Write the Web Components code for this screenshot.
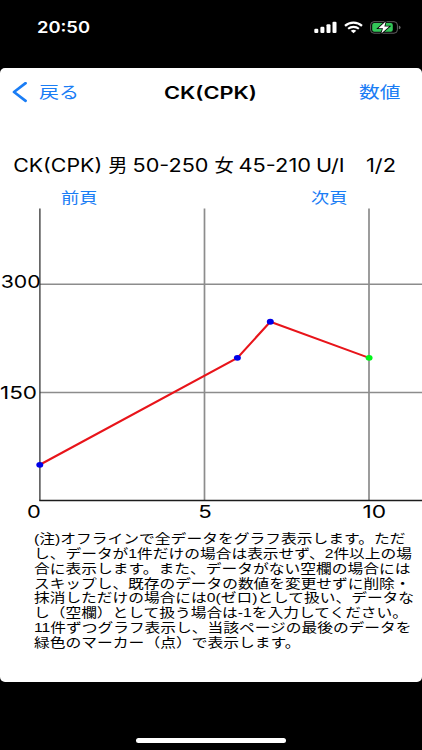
<!DOCTYPE html>
<html lang="ja">
<head>
<meta charset="utf-8">
<title>CK(CPK)</title>
<style>
    body{
        background-color: #000;
        font-family: Inter, 'Noto Sans CJK JP', sans-serif;
        margin: 0;
        overflow: hidden;
    }
</style>
</head>
<body>
<app-screen-component>
    <status-bar-component slot="status" time="20:50"></status-bar-component>
    <nav-bar-component slot="nav" back="戻る" title-text="CK(CPK)" action="数値"></nav-bar-component>
    <range-heading-component></range-heading-component>
    <page-links-component previous="前頁" next="次頁"></page-links-component>
    <line-chart-component></line-chart-component>
    <chart-note-component></chart-note-component>
</app-screen-component>

<script>
// One line of text stretched to a given advance width
class FitTextComponent extends HTMLElement {

    constructor() {
        super();
        this.shadow = this.attachShadow({ mode: 'open' });
    }

    connectedCallback() {
        this.render();
    }

    render() {

        let width = this.getAttribute('width');
        let height = this.getAttribute('height') || 20;
        let base = this.getAttribute('base') || 16;

        this.shadow.innerHTML =
        `
        <style>
            :host{
                display: block;
                height: ${height}px;
                width: ${width}px;
            }

            svg{
                display: block;
                overflow: visible;
            }

            text{
                fill: currentColor;
                font-size: ${this.getAttribute('size')}px;
            }
        </style>

        <svg width="${width}" height="${height}">
            <text x="0" y="${base}" textLength="${width}" lengthAdjust="spacingAndGlyphs">${this.getAttribute('text')}</text>
        </svg>`;
    }
}

customElements.define('fit-text-component', FitTextComponent);

class AppScreenComponent extends HTMLElement {

    constructor() {
        super();
        this.shadow = this.attachShadow({ mode: 'open' });
    }

    connectedCallback() {
        this.render();
    }

    render() {

        this.shadow.innerHTML =
        `
        <style>
            :host{
                background-color: #000;
                display: flex;
                flex-direction: column;
                height: 750px;
                width: 422px;
            }

            main{
                background-color: #fff;
                border-radius: 5px;
                color: #000;
                height: 614px;
            }

            footer{
                align-items: flex-end;
                display: flex;
                flex: 1;
                justify-content: center;
                padding-bottom: 7.5px;
            }

            #home-indicator{
                background-color: #fff;
                border-radius: 3px;
                height: 5px;
                width: 150px;
            }
        </style>

        <slot name="status"></slot>
        <main>
            <slot name="nav"></slot>
            <slot></slot>
        </main>
        <footer>
            <div id="home-indicator"></div>
        </footer>`;
    }
}

customElements.define('app-screen-component', AppScreenComponent);

class StatusBarComponent extends HTMLElement {

    constructor() {
        super();
        this.shadow = this.attachShadow({ mode: 'open' });
    }

    connectedCallback() {
        this.render();
    }

    render() {

        this.shadow.innerHTML =
        `
        <style>
            :host{
                box-sizing: border-box;
                color: #fff;
                display: flex;
                font-weight: 600;
                height: 68px;
                justify-content: space-between;
                padding: 17px 21px 0 36.5px;
            }

            #icons{
                display: flex;
                gap: 7px;
                padding-top: 4px;
            }

            svg{
                display: block;
            }
        </style>

        <fit-text-component text="${this.getAttribute('time')}" width="53" size="15.8" base="16.3"></fit-text-component>

        <div id="icons">
            <svg width="23" height="13" viewBox="0 0 23 13" fill="#fff">
                <rect x="0.3" y="7.8" width="4" height="4.2" rx="1.1"/>
                <rect x="6.4" y="5.8" width="4" height="6.2" rx="1.1"/>
                <rect x="12.5" y="3.2" width="4" height="8.8" rx="1.1"/>
                <rect x="18.5" y="0.7" width="4" height="11.3" rx="1.1"/>
            </svg>
            <svg width="19" height="13" viewBox="0 0 19 13" fill="none" stroke="#fff">
                <path d="M1 4.9C5.7 0.6 13.3 0.6 18 4.9" stroke-width="2.2"/>
                <path d="M4.1 7.8C7.2 5.2 11.8 5.2 14.9 7.8" stroke-width="2.1"/>
                <path d="M6.7 9.8Q9.5 7.9 12.3 9.8L9.5 12.2Z" fill="#fff" stroke="none"/>
            </svg>
            <svg width="31" height="13" viewBox="0 0 31 13">
                <rect x="0.6" y="0.7" width="26.8" height="11.5" rx="3.4" fill="none" stroke="#6c6c6c" stroke-width="0.9"/>
                <rect x="2.2" y="2.1" width="20.6" height="8.7" rx="2" fill="#34c759"/>
                <path d="M28.8 4.6Q30.6 5 30.6 6.4Q30.6 7.8 28.8 8.2Z" fill="#6c6c6c"/>
                <path d="M15.7 0.4L8.3 7.2H13L11.3 12.5L19.2 5.6H14.4Z" fill="#fff" stroke="#000" stroke-width="1.6" paint-order="stroke"/>
            </svg>
        </div>`;
    }
}

customElements.define('status-bar-component', StatusBarComponent);

class NavBarComponent extends HTMLElement {

    constructor() {
        super();
        this.shadow = this.attachShadow({ mode: 'open' });
    }

    connectedCallback() {
        this.render();
    }

    render() {

        this.shadow.innerHTML =
        `
        <style>
            :host{
                display: grid;
                grid-template-columns: 1fr auto 1fr;
                height: 34px;
                box-sizing: border-box;
                padding: 13.5px 22px 0 12px;
            }

            #back{
                color: #1a7df5;
                display: flex;
                gap: 10.5px;
            }

            #back svg{
                display: block;
            }

            #title{
                font-weight: 600;
                margin-left: 9px;
            }

            #action{
                color: #1a7df5;
                justify-self: end;
            }
        </style>

        <div id="back">
            <svg width="16" height="21" viewBox="0 0 16 21" fill="none" stroke="currentColor" stroke-width="2.7" stroke-linecap="round" stroke-linejoin="round">
                <path d="M13.6 1.2L2 10L13.6 18.8"/>
            </svg>
            <fit-text-component text="${this.getAttribute('back')}" width="40" size="16.3" base="15.8"></fit-text-component>
        </div>
        <fit-text-component id="title" text="${this.getAttribute('title-text')}" width="93" size="17.2" base="16.5"></fit-text-component>
        <fit-text-component id="action" text="${this.getAttribute('action')}" width="41.5" size="16.3" base="16"></fit-text-component>`;
    }
}

customElements.define('nav-bar-component', NavBarComponent);

class RangeHeadingComponent extends HTMLElement {

    constructor() {
        super();
        this.shadow = this.attachShadow({ mode: 'open' });
    }

    connectedCallback() {
        this.render();
    }

    render() {

        let parts = [
            ['CK(CPK)', 13.2, 89],
            ['男', 108.3, 19.2],
            ['50-250', 132.5, 76],
            ['女', 214.6, 19.2],
            ['45-210', 238.5, 72.5],
            ['U/I', 316, 28.5],
            ['1/2', 366, 30]
        ];

        this.shadow.innerHTML =
        `
        <style>
            :host{
                display: block;
                padding-top: 50px;
            }

            svg{
                display: block;
            }

            text{
                font-size: 18px;
            }
        </style>

        <svg width="422" height="28">
            <text>${parts.map(part => `<tspan x="${part[1]}" y="20.3" textLength="${part[2]}" lengthAdjust="spacingAndGlyphs">${part[0]}</tspan>`).join(' ')}</text>
        </svg>`;
    }
}

customElements.define('range-heading-component', RangeHeadingComponent);

class PageLinksComponent extends HTMLElement {

    constructor() {
        super();
        this.shadow = this.attachShadow({ mode: 'open' });
    }

    connectedCallback() {
        this.render();
    }

    render() {

        this.shadow.innerHTML =
        `
        <style>
            :host{
                color: #1a7df5;
                display: flex;
                height: 28px;
                justify-content: space-between;
                padding: 8px 74.5px 0 60.5px;
                box-sizing: border-box;
            }
        </style>

        <fit-text-component text="${this.getAttribute('previous')}" width="36.5" size="15" base="15.2"></fit-text-component>
        <fit-text-component text="${this.getAttribute('next')}" width="36.5" size="15" base="15.2"></fit-text-component>`;
    }
}

customElements.define('page-links-component', PageLinksComponent);

class LineChartComponent extends HTMLElement {

    constructor() {
        super();
        this.shadow = this.attachShadow({ mode: 'open' });
        this.points = [[0, 49], [6, 197], [7, 247], [10, 197]];
    }

    connectedCallback() {
        this.render();
    }

    x(value) {
        return 39.8 + value * 32.93;
    }

    y(value) {
        return 292.2 - value * 0.7225;
    }

    render() {

        let line = this.points.map(p => `${this.x(p[0])},${this.y(p[1])}`).join(' ');

        // the last point of the page gets the green marker
        let markers = this.points.map((p, i) => {
            let color = i == this.points.length - 1 ? '#00f51a' : '#0000e8';
            return `<ellipse cx="${this.x(p[0])}" cy="${this.y(p[1])}" rx="3.5" ry="2.9" fill="${color}"/>`;
        }).join('');

        this.shadow.innerHTML =
        `
        <style>
            :host{
                display: block;
                height: 322px;
            }

            svg{
                display: block;
            }

            text{
                font-size: 17.8px;
            }
        </style>

        <svg width="422" height="322">
            <g stroke="#8c8c8c" stroke-width="1.5">
                <path d="M40 76.2H422M40 184.4H422"/>
                <path d="M204.5 0.5V292M369 0.5V292" stroke-width="1.7"/>
            </g>
            <path d="M39.9 0.5V292.5" stroke="#333" stroke-width="1.3"/>
            <path d="M39.3 292.5H422" stroke="#1c1c1c" stroke-width="1.3"/>
            <polyline points="${line}" fill="none" stroke="#e8141a" stroke-width="2.1"/>
            ${markers}
            <text x="0.7" y="80.3" textLength="40" lengthAdjust="spacingAndGlyphs">300</text>
            <text x="0" y="191" textLength="37" lengthAdjust="spacingAndGlyphs">150</text>
            <text x="27" y="310" textLength="13.8" lengthAdjust="spacingAndGlyphs">0</text>
            <text x="198.3" y="310" textLength="13.5" lengthAdjust="spacingAndGlyphs">5</text>
            <text x="362.5" y="310" textLength="23.6" lengthAdjust="spacingAndGlyphs">10</text>
        </svg>`;
    }
}

customElements.define('line-chart-component', LineChartComponent);

class ChartNoteComponent extends HTMLElement {

    constructor() {
        super();
        this.shadow = this.attachShadow({ mode: 'open' });
        this.lines = [
            ['(注)オフラインで全データをグラフ表示します。ただ', 371.5],
            ['し、データが1件だけの場合は表示せず、2件以上の場', 378],
            ['合に表示します。また、データがない空欄の場合には', 376.5],
            ['スキップし、既存のデータの数値を変更せずに削除・', 376.5],
            ['抹消しただけの場合には0(ゼロ)として扱い、データな', 380],
            ['し（空欄）として扱う場合は-1を入力してください。', 374],
            ['11件ずつグラフ表示し、当該ページの最後のデータを', 377.5],
            ['緑色のマーカー（点）で表示します。', 266.5]
        ];
    }

    connectedCallback() {
        this.render();
    }

    render() {

        this.shadow.innerHTML =
        `
        <style>
            :host{
                display: block;
                font-family: 'Liberation Sans', 'Noto Sans CJK JP', sans-serif;
                padding-left: 33.8px;
            }
        </style>

        ${this.lines.map(line => `<fit-text-component text="${line[0]}" width="${line[1]}" height="14.85" size="13" base="13.2"></fit-text-component>`).join('')}`;
    }
}

customElements.define('chart-note-component', ChartNoteComponent);
</script>
</body>
</html>
